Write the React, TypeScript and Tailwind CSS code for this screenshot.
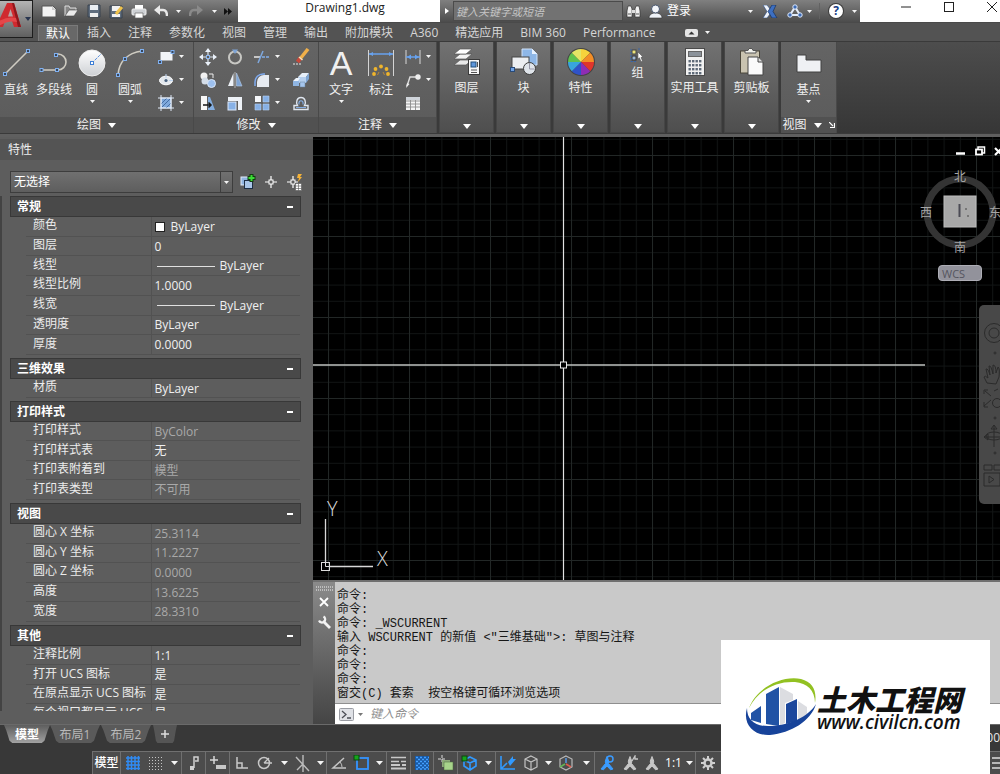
import React from "react";

type Kids = { children?: React.ReactNode };

const uiFont = "font-['Open_Sans','Noto_Sans_CJK_SC',sans-serif]";

/* ---------- small shared marks ---------- */

function Caret({ big = false }: { big?: boolean }) {
  return big ? (
    <svg width="8" height="5" viewBox="0 0 8 5" className="shrink-0"><path d="M0 0h8L4 5z" fill="#fff" /></svg>
  ) : (
    <svg width="5" height="3" viewBox="0 0 5 3" className="shrink-0"><path d="M0 0h5L2.5 3z" fill="#f4f4f4" /></svg>
  );
}

function Ico({ w = 18, h = 18, vb, children }: Kids & { w?: number; h?: number; vb?: string }) {
  return (
    <svg width={w} height={h} viewBox={vb ?? `0 0 ${w} ${h}`} fill="none" className="shrink-0">
      {children}
    </svg>
  );
}

function Grip({ x, y }: { x: number; y: number }) {
  return <rect x={x - 1.5} y={y - 1.5} width="3" height="3" fill="#39465a" stroke="#7fb0f0" strokeWidth="1" />;
}

/* ---------- ribbon: draw ---------- */

const LineIcon = () => (
  <Ico w={30} h={30}><path d="M4 26 27 3" stroke="#cfccc2" strokeWidth="1.6" /><Grip x={4} y={26} /><Grip x={27} y={3} /></Ico>
);
const PolyIcon = () => (
  <Ico w={30} h={30}><path d="M2 22h17a8 8 0 0 0 0-16h-2" stroke="#cfccc2" strokeWidth="1.6" /><Grip x={2.5} y={22} /><Grip x={18} y={22} /><Grip x={17} y={7} /></Ico>
);
const CircleIcon = () => (
  <Ico w={30} h={30}>
    <defs><linearGradient id="disc" x1="0" y1="0" x2="0" y2="1"><stop stopColor="#fff" /><stop offset="1" stopColor="#cdd0d4" /></linearGradient></defs>
    <circle cx="15" cy="15" r="13" fill="url(#disc)" stroke="#eee" /><path d="m15 15 9-9" stroke="#5a90dc" strokeDasharray="3 1" /><rect x="13.5" y="13.5" width="3" height="3" fill="#fff" stroke="#3e7fd6" />
  </Ico>
);
const ArcIcon = () => (
  <Ico w={30} h={30}><path d="M3 27C4 14 12 5 27 3" stroke="#cfccc2" strokeWidth="1.6" /><Grip x={3} y={27} /><Grip x={10} y={11} /><Grip x={27} y={3} /></Ico>
);
const RectIcon = () => (
  <Ico><rect x="3.5" y="4" width="12" height="8.500" fill="#f2f4f7" /><Grip x={3} y={14} /><Grip x={15.5} y={4} /></Ico>
);
const EllipseIcon = () => (
  <Ico><ellipse cx="9" cy="9.500" rx="6.500" ry="4.300" fill="#e4e9ee" stroke="#fff" /><circle cx="9" cy="9.500" r="1.600" fill="#49627f" /><path d="M9 3v4M12 9.500h4" stroke="#bcd2ee" /></Ico>
);
const HatchIcon = () => (
  <Ico>
    <rect x="4" y="4" width="10" height="10" fill="#7fa9dc" stroke="#e6eefa" /><path d="M4 10 10 4M5 13l8-8M9 14l5-5" stroke="#456da3" />
    <path d="M4 1v16M14 1v16M1 4h16M1 14h16" stroke="#dfe9f7" />
  </Ico>
);

/* ---------- ribbon: modify ---------- */

const MoveIcon = () => (
  <Ico><path d="M9 1v16M1 9h16" stroke="#dce6f2" strokeWidth="1.200" /><path d="M9 0 6 4h6zM9 18l-3-4h6zM0 9l4-3v6zM18 9l-4-3v6z" fill="#eaf1fa" /><rect x="7.500" y="7.500" width="3" height="3" fill="#5b5b5b" stroke="#8db7ee" /></Ico>
);
const RotateIcon = () => (
  <Ico><circle cx="9" cy="9.500" r="6" stroke="#c8c8c4" strokeWidth="2" /><path d="M6 1.500h6L9 6z" fill="#7ea4d6" /></Ico>
);
const TrimIcon = () => (
  <Ico><path d="M1 9h6" stroke="#e8e8e8" strokeWidth="1.500" /><path d="M9 9h8" stroke="#82aee8" strokeWidth="1.500" strokeDasharray="3 1" /><path d="M5 15 10 3" stroke="#7fa9df" strokeWidth="1.500" /></Ico>
);
const EraseIcon = () => (
  <Ico><path d="M16 1 8 11" stroke="#f0b04a" strokeWidth="3.500" /><path d="m8.500 10-3 4" stroke="#c8483a" strokeWidth="4" /><path d="m7 9 3.500 3" stroke="#f5e5bb" strokeWidth="1.500" /><path d="M1 16h8" stroke="#e8e8e8" strokeDasharray="2 1" /></Ico>
);
const CopyIcon = () => (
  <Ico><circle cx="5" cy="5" r="3.500" fill="#f2f2f2" /><circle cx="6" cy="10" r="3.500" fill="#d4dde8" /><circle cx="12.500" cy="12.500" r="4" fill="#9dc0ee" stroke="#dce9fa" /><path d="M10 3h4v4" stroke="#eee" /></Ico>
);
const MirrorIcon = () => (
  <Ico><path d="M7.500 2v13H2z" fill="#eef2f7" /><path d="M10.500 2v13H16z" fill="#7fa5d5" stroke="#b7cdea" strokeWidth=".6" /><path d="M9 1v16" stroke="#d5d5d5" strokeWidth=".7" /></Ico>
);
const FilletIcon = () => (
  <Ico><path d="M4 16V11a7 7 0 0 1 7-7h5v12z" fill="#e6eaf0" /><path d="M2 15v-4a8 8 0 0 1 8-8h2" stroke="#7eaaf0" strokeWidth="1.500" /></Ico>
);
const ExplodeIcon = () => (
  <Ico>
    <path d="m6 6 4-4h7l-3 4z" fill="#e6eff9" /><path d="M14 6l3-4v6l-3 4z" fill="#7fa6d4" /><path d="M6 6h8v6H6z" fill="#b5cfee" />
    <path d="m1 10 3-3h4l-2 3z" fill="#eef4fb" /><path d="M1 10h6v5H1z" fill="#8fb5e2" /><path d="M8 11h5v5H8z" fill="#a5c5ec" stroke="#64819f" strokeWidth=".5" />
  </Ico>
);
const StretchIcon = () => (
  <Ico><path d="M2 2h6v14H2z" fill="#f7f7f7" /><path d="M9 3h2l5 13H9z" fill="#83addf" /><path d="M4 11h8M9.500 8.500 12 11l-2.500 2.500" stroke="#161616" strokeWidth="1.500" /></Ico>
);
const ScaleIcon = () => (
  <Ico><path d="M2 3h14v13h-4V7H2z" fill="#eef2f7" /><rect x="2" y="8" width="8" height="8" fill="#87b1e6" stroke="#dbe8f9" /></Ico>
);
const ArrayIcon = () => (
  <Ico><rect x="2" y="2" width="6" height="6" fill="#f5f7fa" /><path d="M10 2h6v6h-6zM2 10h6v6H2zM10 10h6v6h-6z" fill="#86b0e5" stroke="#b7d1f2" strokeWidth=".6" /></Ico>
);
const OffsetIcon = () => (
  <Ico><path d="M2 15.500h14v-4h-3.500c2-3.500.5-8-3.500-8s-5.500 4.500-3.500 8H2z" stroke="#dfe6ef" strokeWidth="1.400" /><path d="M4 13.500h10M7 10.500c-1-5 5-5 4 0" stroke="#84ade3" strokeWidth="1.200" /></Ico>
);

/* ---------- ribbon: annotate and the rest ---------- */

const DimBigIcon = () => (
  <Ico w={28} h={30}>
    <path d="M1.500 2v26M26.500 2v26" stroke="#d4d4d4" /><path d="M2 6h24" stroke="#67a2ef" strokeWidth="1.500" /><path d="m2 6 4-2v4zM26 6l-4-2v4z" fill="#67a2ef" />
    <g fill="#f0b52c"><circle cx="7" cy="26" r="1.900" /><circle cx="8.500" cy="21" r="1.900" /><circle cx="14" cy="18.500" r="1.900" /><circle cx="19.500" cy="21" r="1.900" /><circle cx="21" cy="26" r="1.900" /></g>
    <path d="m12 24-1.500 3M16 24l1.500 3" stroke="#b8893a" />
  </Ico>
);
const DimSmallIcon = () => (
  <Ico><path d="M2 2v14M16 2v14" stroke="#d8d8d8" /><path d="M2 9h14" stroke="#67a2ef" strokeWidth="1.500" /><path d="m3 9 4-2.500v5zM15 9l-4-2.500v5z" fill="#67a2ef" /></Ico>
);
const LeaderIcon = () => (
  <Ico><path d="M3 15 6 6h7" stroke="#ddd" strokeWidth="1.400" /><path d="m2 17 1-5 2.500 1z" fill="#eee" /><circle cx="14" cy="6" r="2.700" fill="#eee" /></Ico>
);
const TableIcon = () => (
  <Ico><rect x="2" y="3" width="14" height="13" fill="#f5f5f5" /><path d="M2 7h14M2 10h14M2 13h14M6.500 3v13M11.500 3v13" stroke="#8d8d8d" strokeWidth=".9" /><path d="M2 3h14v3H2z" fill="#cfd4da" /></Ico>
);
const LayersIcon = () => (
  <Ico w={28} h={28}>
    <g stroke="#555" strokeWidth=".7"><path d="m1 17 6-5h12l-6 5z" fill="#e9e9e9" /><path d="m1 11 6-5h12l-6 5z" fill="#f4f4f4" /><path d="m1 6 6-5h12l-6 5z" fill="#fff" /></g>
    <rect x="15.500" y="11.500" width="11" height="15" fill="#f7f7f7" stroke="#3b3b3b" /><rect x="18" y="14" width="5" height="5" fill="#5f97dc" stroke="#23507d" /><path d="M18 22h6M18 24.500h6M24.500 14v5" stroke="#555" />
  </Ico>
);
const BlockIcon = () => (
  <Ico w={30} h={28}>
    <path d="M13 1h10l5 5v11H13z" fill="#8eb7e7" stroke="#cfe2fa" /><path d="M23 1v5h5" fill="#e8f2ff" /><rect x="3" y="9" width="17" height="12" fill="#eceef1" stroke="#454545" />
    <circle cx="20.500" cy="20.500" r="6" fill="#dfe4ea" stroke="#3c3c3c" /><path d="M20.500 15v6h5" stroke="#99a" /><rect x="1.500" y="19.500" width="4" height="4" fill="#6fa0e2" stroke="#294b79" />
  </Ico>
);
const wheel = ["#f6d33c", "#f28d26", "#e0352c", "#8e2db5", "#2f52c8", "#38a5dd", "#5ec24e", "#e3e565"];
function WheelIcon() {
  return (
    <Ico w={30} h={30}>
      <circle cx="15" cy="15" r="14" fill="#444" />
      {wheel.map((c, i) => {
        const a = ((i * 45 - 90) * Math.PI) / 180;
        const b = ((i * 45 - 45) * Math.PI) / 180;
        return <path key={c} d={`M15 15L${15 + 13 * Math.cos(a)} ${15 + 13 * Math.sin(a)}A13 13 0 0 1 ${15 + 13 * Math.cos(b)} ${15 + 13 * Math.sin(b)}Z`} fill={c} />;
      })}
    </Ico>
  );
}
const GroupIcon = () => (
  <Ico w={16} h={16}><rect x="2" y="2" width="4" height="4" fill="#ece37a" stroke="#444" /><rect x="2" y="8" width="4" height="4" fill="#9db6d4" stroke="#333" /><path d="M1 1v13M1 13.500h6M8 1h2" stroke="#3a66a8" strokeDasharray="2 1" /><path d="m8 4 5 5-2 .3 1.500 4-1.500.5-1.500-4L8 11z" fill="#fff" stroke="#444" strokeWidth=".5" /></Ico>
);
const CalcIcon = () => (
  <Ico w={20} h={28}>
    <rect x=".5" y=".5" width="19" height="27" fill="#f1f1f1" stroke="#4a4a4a" /><rect x="3.500" y="3.500" width="13" height="5" fill="#8b929a" stroke="#666" />
    {[12, 16, 20, 24].map((y) => [3.5, 7, 10.5, 14].map((x) => <rect key={`${x}-${y}`} x={x} y={y} width="2.400" height="2.400" fill="#5e6a78" />))}
  </Ico>
);
const PasteIcon = () => (
  <Ico w={26} h={28}>
    <rect x="1.500" y="3" width="19" height="22" fill="#c9c3b0" stroke="#4a463a" /><path d="M6 5V2.500h3l1-2h3l1 2h3V5z" fill="#f3f3ee" stroke="#555" />
    <path d="M9 9h10l5 5v13H9z" fill="#fafafa" stroke="#444" /><path d="M19 9v5h5" fill="#ddd" stroke="#444" />
  </Ico>
);
const BaseIcon = () => (
  <Ico w={26} h={26}><path d="M1 5h9v5h15v12H1z" fill="#eff1f4" stroke="#404040" /></Ico>
);

/* ---------- ribbon structure ---------- */

function BigTool({ icon, label, width, caret = false }: { icon: React.ReactNode; label: string; width: string; caret?: boolean }) {
  return (
    <button className={`${width} flex flex-col items-center pt-[6px]`}>
      <span className="flex h-[30px] items-center">{icon}</span>
      <span className="mt-1 text-xs leading-4 whitespace-nowrap">{label}</span>
      {caret && <span className="mt-[2px]"><Caret /></span>}
    </button>
  );
}

function SmallTool({ icon, label, caret = false }: { icon: React.ReactNode; label: string; caret?: boolean }) {
  return (
    <button aria-label={label} className="flex h-[23px] items-center">
      <span className="flex w-[27px] justify-center">{icon}</span>
      {caret && <Caret />}
    </button>
  );
}

function OpenPanel({ title, width, children, launcher = false }: Kids & { title: string; width: string; launcher?: boolean }) {
  return (
    <section className={`${width} flex shrink-0 flex-col border-r border-[#494949] bg-gradient-to-b from-[#646464] to-[#5b5b5b]`}>
      <div className="flex flex-1">{children}</div>
      <button className="flex h-4 items-center justify-center gap-[7px] bg-[#515151] text-xs leading-4">
        {title}<Caret big />
        {launcher && <svg width="6" height="6" viewBox="0 0 6 6"><path d="m0 0 4 4M5.500 1v4.500H1" stroke="#fff" fill="none" strokeWidth="1.200" /></svg>}
      </button>
    </section>
  );
}

function ClosedPanel({ title, icon, small = false }: { title: string; icon: React.ReactNode; small?: boolean }) {
  return (
    <button className="flex w-[55px] shrink-0 flex-col items-center border border-t-0 border-[#454545] bg-gradient-to-b from-[#727272] to-[#4e4e4e] pt-[5px]">
      <span className={small ? "flex h-[18px] items-center" : "flex h-[30px] items-center"}>{icon}</span>
      <span className={`${small ? "" : "mt-[3px]"} text-xs leading-4 whitespace-nowrap`}>{title}</span>
      <span className="mt-auto pb-[3px]"><Caret big /></span>
    </button>
  );
}

function Ribbon() {
  return (
    <div className="flex h-[93px] shrink-0 overflow-hidden border-t border-b border-[#3a3a3a] bg-gradient-to-b from-[#4d4d4d] to-[#363636] text-[#f0f0f0]">
      <OpenPanel title="绘图" width="w-[194px]">
        <BigTool icon={<LineIcon />} label="直线" width="w-8" />
        <BigTool icon={<PolyIcon />} label="多段线" width="w-11" />
        <BigTool icon={<CircleIcon />} label="圆" width="w-8" caret />
        <BigTool icon={<ArcIcon />} label="圆弧" width="w-11" caret />
        <div className="flex flex-col pt-[3px]">
          <SmallTool icon={<RectIcon />} label="矩形" caret />
          <SmallTool icon={<EllipseIcon />} label="椭圆" caret />
          <SmallTool icon={<HatchIcon />} label="图案填充" caret />
        </div>
      </OpenPanel>
      <OpenPanel title="修改" width="w-[125px]">
        <div className="grid grid-cols-[27px_27px_39px_27px] content-start pt-[3px]">
          <SmallTool icon={<MoveIcon />} label="移动" />
          <SmallTool icon={<RotateIcon />} label="旋转" />
          <SmallTool icon={<TrimIcon />} label="修剪" caret />
          <SmallTool icon={<EraseIcon />} label="删除" />
          <SmallTool icon={<CopyIcon />} label="复制" />
          <SmallTool icon={<MirrorIcon />} label="镜像" />
          <SmallTool icon={<FilletIcon />} label="圆角" caret />
          <SmallTool icon={<ExplodeIcon />} label="分解" />
          <SmallTool icon={<StretchIcon />} label="拉伸" />
          <SmallTool icon={<ScaleIcon />} label="缩放" />
          <SmallTool icon={<ArrayIcon />} label="阵列" caret />
          <SmallTool icon={<OffsetIcon />} label="偏移" />
        </div>
      </OpenPanel>
      <OpenPanel title="注释" width="w-[118px]">
        <BigTool icon={<span className="font-['Liberation_Sans',sans-serif] text-[34px] leading-[30px]">A</span>} label="文字" width="w-[44px]" caret />
        <BigTool icon={<DimBigIcon />} label="标注" width="w-9" />
        <div className="flex flex-col pt-[3px]">
          <SmallTool icon={<DimSmallIcon />} label="线性" caret />
          <SmallTool icon={<LeaderIcon />} label="引线" caret />
          <SmallTool icon={<TableIcon />} label="表格" />
        </div>
      </OpenPanel>
      <div className="flex gap-[2px] bg-[#3a3a3a] px-[2px]">
        <ClosedPanel title="图层" icon={<LayersIcon />} />
        <ClosedPanel title="块" icon={<BlockIcon />} />
        <ClosedPanel title="特性" icon={<WheelIcon />} />
        <ClosedPanel title="组" icon={<GroupIcon />} small />
        <ClosedPanel title="实用工具" icon={<CalcIcon />} />
        <ClosedPanel title="剪贴板" icon={<PasteIcon />} />
      </div>
      <OpenPanel title="视图" width="w-[56px]" launcher>
        <BigTool icon={<BaseIcon />} label="基点" width="w-full" caret />
      </OpenPanel>
    </div>
  );
}

/* ---------- title bar ---------- */

function Quick({ label, width = "w-[22px]", children }: Kids & { label: string; width?: string }) {
  return <button aria-label={label} className={`${width} flex h-full shrink-0 items-center justify-center`}>{children}</button>;
}

const barShade = "bg-gradient-to-b from-[#808080] to-[#4c4c4c]";

function TitleBar() {
  return (
    <div className="flex h-[23px] shrink-0 border-b border-[#4a4a4a] bg-white">
      <div className={`${barShade} flex w-[205px] shrink-0 items-center pl-[5px]`}>
        <Quick label="新建"><Ico w={16} h={14}><path d="M1 2h11l3 3v8H1z" fill="#f3f3f3" stroke="#555" /><path d="M11 2v4h4" fill="#ccc" /></Ico></Quick>
        <Quick label="打开"><Ico w={16} h={14}><path d="M2 12V2h4l1 2h6v2" fill="#878787" stroke="#ddd" /><path d="m2 12 4-6h9l-4 6z" fill="#ebebeb" stroke="#444" strokeWidth=".6" /></Ico></Quick>
        <Quick label="保存" width="w-[23px]"><Ico w={14} h={14}><path d="M1 1h12v12H1z" fill="#5f6d7e" stroke="#39424e" /><path d="M3 1h8v5H3z" fill="#e9edf2" /><path d="M3 9h8v4H3z" fill="#eee" /></Ico></Quick>
        <Quick label="另存为" width="w-[23px]"><Ico w={15} h={15}><path d="M1 2h12v12H1z" fill="#5f6d7e" stroke="#39424e" /><path d="M3 2h8v5H3zM3 10h8v3H3z" fill="#f2f2f2" /><path d="m13 3-6 7" stroke="#efc24c" strokeWidth="3" /></Ico></Quick>
        <Quick label="打印"><Ico w={16} h={15}><path d="M4 1h8v5H4z" fill="#fff" /><rect x="1" y="5" width="14" height="6" rx="1" fill="#cdd0d4" stroke="#eee" /><path d="M4 9h8v5H4z" fill="#fff" stroke="#666" strokeWidth=".7" /></Ico></Quick>
        <Quick label="放弃"><Ico w={14} h={12}><path d="M4 5h5q4 0 4 6" stroke="#e9e9e9" strokeWidth="2.400" /><path d="M0 5 6 0v10z" fill="#e9e9e9" /></Ico></Quick>
        <Quick label="放弃列表" width="w-3"><Caret /></Quick>
        <Quick label="重做" width="w-6"><Ico w={14} h={12}><path d="M10 5H5Q1 5 1 11" stroke="#8a8a8a" strokeWidth="2.400" /><path d="M14 5 8 0v10z" fill="#8a8a8a" /></Ico></Quick>
        <Quick label="重做列表" width="w-3"><Caret /></Quick>
        <Quick label="更多" width="w-4"><Ico w={8} h={7}><path d="M0 0v7l4-3.500zM4 0v7l4-3.500z" fill="#111" /></Ico></Quick>
      </div>
      <h1 className="w-[202px] shrink-0 pl-3 text-center text-xs leading-[15px] text-[#222]">Drawing1.dwg</h1>
      <div className={`${barShade} flex w-[420px] shrink-0 items-center`}>
        <Quick label="展开搜索" width="w-[13px]"><Ico w={4} h={6}><path d="M0 0v6l4-3z" fill="#fff" /></Ico></Quick>
        <input aria-label="搜索" placeholder="键入关键字或短语" className="h-5 w-[170px] shrink-0 border border-[#4b4b4b] bg-[#727272] px-[2px] text-[11px] text-white italic outline-none placeholder:text-[#c4c4c4]" />
        <Quick label="查找" width="w-[21px]"><Ico w={15} h={14}><path d="M2 2h3l1 3v8H1V7zM10 2h3l1 5v6H9V5z" fill="#f1f1f1" stroke="#333" strokeWidth=".7" /><path d="M6 6h3v3H6z" fill="#ddd" /><path d="M2 10h3M10 10h3" stroke="#555" /></Ico></Quick>
        <button className="flex h-full w-[109px] shrink-0 items-center gap-1 pl-1 text-xs text-white">
          <Ico w={15} h={15}><path d="M1 14q0-4 5-5h3q5 1 5 5z" fill="#eef2f8" stroke="#333" strokeWidth=".6" /><circle cx="7.500" cy="5" r="4" fill="#f4f6fa" stroke="#48566e" /></Ico>登录
          <span className="ml-auto"><Caret /></span>
        </button>
        <Quick label="应用商店" width="w-[34px]"><Ico w={15} h={13}><path d="M0 0h4l5 6.500L4 13H0l4-6.500z" fill="#f0f4fa" stroke="#274a86" strokeWidth=".6" /><path d="M13 0H9L5 6.500 9 13h5l-4-6.500z" fill="#3d6fc0" stroke="#17305f" strokeWidth=".7" /></Ico></Quick>
        <Quick label="连接" width="w-4"><Ico w={16} h={14}><path d="M8 3 3 11h10z" stroke="#e4edfb" strokeWidth="2" /><circle cx="8" cy="3" r="2.200" fill="#3c6bb6" stroke="#dfe9fa" /><circle cx="3" cy="11" r="2.200" fill="#3c6bb6" stroke="#dfe9fa" /><circle cx="13" cy="11" r="2.200" fill="#3c6bb6" stroke="#dfe9fa" /></Ico></Quick>
        <Quick label="连接列表" width="w-3"><Caret /></Quick>
        <span className="ml-1 h-4 w-px shrink-0 bg-[#626262]" />
        <Quick label="帮助" width="w-8">
          <span className="flex size-[14px] items-center justify-center rounded-full bg-white text-[12px] leading-[14px] font-bold text-[#173c84] ring-1 ring-[#3c3c3c]">?</span>
        </Quick>
        <Caret />
      </div>
      <div className="flex min-w-0 flex-1 items-start justify-between pt-[1px] pr-[2px] pl-10">
        <button aria-label="最小化"><Ico w={12} h={12}><path d="M1 6h10" stroke="#222" /></Ico></button>
        <button aria-label="最大化"><Ico w={12} h={12}><rect x="1.500" y="1.500" width="9" height="9" stroke="#222" /></Ico></button>
        <button aria-label="关闭"><Ico w={12} h={12}><path d="m1 1 10 10M11 1 1 11" stroke="#222" /></Ico></button>
      </div>
    </div>
  );
}

const menuTabs = ["默认", "插入", "注释", "参数化", "视图", "管理", "输出", "附加模块", "A360", "精选应用", "BIM 360", "Performance"];

function Header() {
  return (
    <header className="flex h-[41px] shrink-0 bg-[#535353]">
      <button aria-label="应用程序菜单" className="flex h-[38px] w-[33px] shrink-0 items-start gap-[2px] border border-l-0 border-[#1d1d1d] bg-gradient-to-b from-[#b4b4b4] to-[#606060]">
        <svg width="23" height="36" viewBox="0 0 23 36">
          <path d="M7 2h7l7 24h-7l-2-6H5l-2 6h-7z" fill="#cf2a2f" />
          <path d="M12 2h2l7 24h-3z" fill="#8e171c" />
          <path d="M10.500 8 8 15.500h5z" fill="#b9a5a5" />
          <path d="M-1 20q9-5 17-3l1 4q-9-2-18 4z" fill="#e4474a" />
        </svg>
        <svg width="6" height="4" viewBox="0 0 6 4" className="self-center"><path d="M0 0h6L3 4z" fill="#28354f" /></svg>
      </button>
      <div className="flex min-w-0 flex-1 flex-col">
        <TitleBar />
        <nav className="flex flex-1 items-stretch gap-px pl-[5px] text-xs leading-[18px] text-[#d6d6d6]">
          {menuTabs.map((t, i) => (
            <button key={t} className={i === 0 ? "mt-[2px] border border-b-0 border-[#7a7a7a] bg-[#686868] px-[7px] leading-[14px] text-white" : "shrink-0 px-2 pt-[1px]"}>{t}</button>
          ))}
          <button aria-label="最小化功能区" className="ml-5 flex items-center gap-[7px]">
            <Ico w={13} h={8}><rect width="13" height="8" rx="2" fill="#e4e4e4" /><path d="M3.500 5.500h6l-3-3z" fill="#333" /></Ico><Caret />
          </button>
        </nav>
      </div>
    </header>
  );
}

/* ---------- properties palette ---------- */

type Row = { name: string; value: string; dim?: boolean; mark?: "swatch" | "line" };
type Group = { title: string; height: string; rows: Row[] };

const groups: Group[] = [
  {
    title: "常规", height: "h-[138px]", rows: [
      { name: "颜色", value: "ByLayer", mark: "swatch" }, { name: "图层", value: "0" }, { name: "线型", value: "ByLayer", mark: "line" },
      { name: "线型比例", value: "1.0000" }, { name: "线宽", value: "ByLayer", mark: "line" }, { name: "透明度", value: "ByLayer" }, { name: "厚度", value: "0.0000" },
    ],
  },
  { title: "三维效果", height: "h-[19px]", rows: [{ name: "材质", value: "ByLayer" }] },
  {
    title: "打印样式", height: "h-[78px]", rows: [
      { name: "打印样式", value: "ByColor", dim: true }, { name: "打印样式表", value: "无" }, { name: "打印表附着到", value: "模型", dim: true }, { name: "打印表类型", value: "不可用", dim: true },
    ],
  },
  {
    title: "视图", height: "h-[98px]", rows: [
      { name: "圆心 X 坐标", value: "25.3114", dim: true }, { name: "圆心 Y 坐标", value: "11.2227", dim: true }, { name: "圆心 Z 坐标", value: "0.0000", dim: true },
      { name: "高度", value: "13.6225", dim: true }, { name: "宽度", value: "28.3310", dim: true },
    ],
  },
  {
    title: "其他", height: "h-[78px]", rows: [
      { name: "注释比例", value: "1:1" }, { name: "打开 UCS 图标", value: "是" }, { name: "在原点显示 UCS 图标", value: "是" }, { name: "每个视口都显示 UCS", value: "是" },
    ],
  },
];

function PropertyGroup({ group }: { group: Group }) {
  return (
    <section className="mb-[3px]">
      <button className="flex h-[21px] w-full items-center justify-between border border-[#383838] bg-[#494949] pr-[7px] pl-[6px] text-xs leading-[19px] font-bold text-white">
        {group.title}<span className="h-[2px] w-[6px] bg-white" />
      </button>
      <table className={`${group.height} ml-4 w-[274px] table-fixed text-xs leading-4`}>
        <tbody>
          {group.rows.map((r) => (
            <tr key={r.name} className="border-b border-[#525252]">
              <th scope="row" className="w-[125px] border-r border-[#525252] p-0 pb-[2px] pl-[7px] text-left font-normal whitespace-nowrap text-[#ececec]">{r.name}</th>
              <td className={`p-0 pt-px pl-[3px] whitespace-nowrap ${r.dim ? "text-[#a9a9a9]" : "text-[#f0f0f0]"}`}>
                <span className="flex items-center">
                  {r.mark === "swatch" && <span className="mr-[6px] size-[10px] border border-[#222] bg-white" />}
                  {r.mark === "line" && <span className="mr-[5px] ml-[2px] h-px w-[58px] bg-[#e0e0e0]" />}
                  {r.value}
                </span>
              </td>
            </tr>
          ))}
        </tbody>
      </table>
    </section>
  );
}

function Properties() {
  return (
    <aside className="flex w-[313px] shrink-0 flex-col bg-[#5d5d5d]">
      <h2 className="mt-[2px] h-[21px] bg-[#545454] pl-2 text-xs leading-[21px] text-[#eee]">特性</h2>
      <div className="mt-[11px] flex h-[22px] shrink-0 items-center pl-[10px]">
        <label className="grid h-full w-[223px] grid-cols-[1fr_12px] border border-[#3d3d3d] bg-gradient-to-b from-[#707070] to-[#5e5e5e]">
          <select aria-label="选定对象" className="col-span-2 col-start-1 row-start-1 appearance-none bg-transparent pl-[3px] text-xs text-white outline-none"><option>无选择</option></select>
          <span className="pointer-events-none col-start-2 row-start-1 flex items-center justify-center border-l border-[#3d3d3d]"><Caret /></span>
        </label>
        <button aria-label="切换选择" className="ml-[7px]"><Ico w={16} h={16}><rect x="1" y="3" width="8" height="8" fill="#8fb3df" stroke="#e4eefb" /><rect x="4.500" y="6.500" width="8" height="8" fill="#a9c5e8" stroke="#1d2e45" /><path d="M11.500 0v8M7.500 4h8" stroke="#133b10" strokeWidth="4" /><path d="M11.500 1v6M8.500 4h6" stroke="#3bdc35" strokeWidth="2" /></Ico></button>
        <button aria-label="选择对象" className="ml-[7px]"><Ico w={16} h={16}><path d="M8 2v4M8 10v4M2 8h4M10 8h4" stroke="#fff" strokeWidth="1.200" /><rect x="6" y="6" width="4" height="4" stroke="#fff" /></Ico></button>
        <button aria-label="快速选择" className="ml-[7px]"><Ico w={17} h={17}><path d="M7 2v4M7 10v4M1 8h4M9 8h3" stroke="#fff" strokeWidth="1.200" /><rect x="5" y="6" width="4" height="4" stroke="#fff" /><path d="M12 0h4l-2 3h2l-4 5 1-4h-2z" fill="#f5b338" /><rect x="9.500" y="9.500" width="6" height="7" fill="#fff" stroke="#555" strokeWidth=".6" /><path d="M9.500 12h6M9.500 14.500h6M12.500 9.500v7" stroke="#555" strokeWidth=".6" /></Ico></button>
      </div>
      <div className="mt-[3px] mb-[13px] min-h-0 flex-1 overflow-hidden">
        <div className="border-l-2 border-[#434343] pr-3 pl-2">
          {groups.map((g) => <PropertyGroup key={g.title} group={g} />)}
        </div>
      </div>
    </aside>
  );
}

/* ---------- drawing canvas ---------- */

function ViewCube() {
  return (
    <div className="absolute top-8 -right-[4px] h-[88px] w-[82px] text-xs leading-4 text-[#a6a6a6]">
      <svg width="82" height="88" viewBox="0 0 82 88" className="absolute inset-0">
        <circle cx="38" cy="43" r="33" fill="none" stroke="#343434" strokeWidth="7" />
        <rect x="22" y="27" width="32" height="31" fill="#a8a8a8" stroke="#bcbcbc" /><path d="M37.500 35v13" stroke="#4b4b55" strokeWidth="2" /><path d="M44 39v2M45 47h2" stroke="#666" strokeWidth="1.500" />
      </svg>
      <span className="absolute top-0 left-8">北</span>
      <span className="absolute top-9 -left-[2px]">西</span>
      <span className="absolute top-9 left-[67px]">东</span>
      <span className="absolute top-[71px] left-8">南</span>
    </div>
  );
}

function Canvas() {
  return (
    <main className="relative min-h-0 flex-1 overflow-hidden bg-black">
      <svg className="absolute inset-0 h-full w-full">
        <defs>
          <pattern id="minor" x="15" y="18" width="16.200" height="16.200" patternUnits="userSpaceOnUse"><path d="M0 .5h16.200M.5 0v16.200" stroke="#121515" fill="none" /></pattern>
          <pattern id="major" x="15" y="18" width="81" height="81" patternUnits="userSpaceOnUse"><path d="M0 .5h81M.5 0v81" stroke="#222726" fill="none" /></pattern>
        </defs>
        <rect width="100%" height="100%" fill="url(#minor)" />
        <rect width="100%" height="100%" fill="url(#major)" />
        <path d="M0 228h247M254 228h358" stroke="#bfc1bf" strokeWidth="1.500" />
        <path d="M250.500 0v225M250.500 231v800" stroke="#e2e2e2" strokeWidth="1.200" />
        <rect x="247.500" y="225" width="6" height="6" fill="#000" stroke="#e8e8e8" />
      </svg>
      <svg width="84" height="82" viewBox="0 0 84 82" className="absolute bottom-0 left-2 font-['Open_Sans',sans-serif] font-light">
        <path d="M4.500 21v43M9 68.500h43" stroke="#d8d8d8" strokeWidth="1.300" /><rect x=".5" y="64.500" width="8" height="8" stroke="#ddd" fill="none" /><path d="M4.500 64v4.500h4" stroke="#ddd" fill="none" />
        <text x="6" y="18" fill="#d8d8d8" fontSize="20">Y</text>
        <text x="56" y="68" fill="#d8d8d8" fontSize="20">X</text>
      </svg>
      <div className="absolute top-2 -right-[4px] flex gap-2">
        <button aria-label="最小化视口"><Ico w={12} h={12}><path d="M2 8.500h9" stroke="#fff" strokeWidth="2.500" /></Ico></button>
        <button aria-label="还原视口"><Ico w={12} h={12}><path d="M4 4V2h6.500v6H8" stroke="#fff" strokeWidth="1.500" /><rect x="2" y="4.500" width="6" height="5" stroke="#fff" strokeWidth="1.800" /></Ico></button>
        <button aria-label="关闭视口"><Ico w={10} h={12}><path d="m1 3 7 7M8 3l-7 7" stroke="#fff" strokeWidth="2.200" /></Ico></button>
      </div>
      <ViewCube />
      <button className="absolute top-32 right-[18px] h-4 w-[44px] rounded-[4px] border border-[#aeaeb6] bg-[#92929b] pl-[3px] text-left text-[11px] leading-[13px] text-[#55555f]">WCS</button>
      <div className="absolute top-[168px] -right-[8px] h-[199px] w-[29px] rounded-[5px] bg-[#484848]">
        <svg width="29" height="199" viewBox="0 0 29 199" fill="none" stroke="#2b2b2b">
          <circle cx="15" cy="28" r="9.500" /><circle cx="15" cy="28" r="5" /><circle cx="16" cy="48" r="1" />
          <path d="m8 78-3-6q1-2 4 1l-2-9q2-1 4 6l-1-9q2-1 4 8V60q3 0 3 8l2-6q2 1 1 10l-3 7z" />
          <path d="m6 86 6 5M5 101l7-6M5 89v-4h4M5 97v5h4M15 86l4-2" /><circle cx="18" cy="98" r="4.500" /><circle cx="16" cy="113" r="1" />
          <path d="M5 132h16M15 120v22M5 132l4-3v6zM15 120l-3 4h6z" /><ellipse cx="15" cy="131" rx="8" ry="4" /><circle cx="16" cy="148" r="1" />
          <path d="M5 160h8v5H5zM15 160h8v5h-8zM5 168h16v13H5zM10 171v7l5-3.500z" />
        </svg>
      </div>
    </main>
  );
}

const history = ["命令:", "命令:", "命令: _WSCURRENT", "输入 WSCURRENT 的新值 <\"三维基础\">: 草图与注释", "命令:", "命令:", "命令:", "窗交(C) 套索  按空格键可循环浏览选项"];

function CommandLine() {
  return (
    <section className="flex h-36 shrink-0 border-t-2 border-[#6f6f6f] bg-[#c9c9c9]">
      <div className="flex w-[22px] shrink-0 flex-col items-center bg-gradient-to-b from-[#8b8b8b] to-[#454545] pt-1">
        <svg width="17" height="5"><path d="M0 1h17M0 4h17" stroke="#bdbdbd" strokeWidth="2" strokeDasharray="1 1" /></svg>
        <button aria-label="关闭命令行" className="mt-[6px]"><Ico w={10} h={10}><path d="m1 1 8 8M9 1 1 9" stroke="#fff" strokeWidth="1.800" /></Ico></button>
        <button aria-label="自定义" className="mt-2"><Ico w={13} h={14}><path d="m5 6 7 7" stroke="#f2f2f2" strokeWidth="2.800" /><path d="M5.500 1.500A3.200 3.200 0 1 1 1 5.500" stroke="#f2f2f2" strokeWidth="2.200" /></Ico></button>
      </div>
      <div className="flex min-w-0 flex-1 flex-col">
        <div className="min-h-0 flex-1 overflow-hidden pt-[7px] pl-[2px] font-['Liberation_Mono','Noto_Sans_CJK_SC',monospace] text-xs leading-[14px] whitespace-pre text-[#161616]">
          {history.map((l, i) => <p key={i} className="h-[14px]">{l}</p>)}
        </div>
        <div className="flex h-[21px] shrink-0 items-center border-t border-[#8f8f8f] bg-white pl-1">
          <button aria-label="最近使用的命令" className="flex items-center gap-1">
            <Ico w={15} h={13}><rect x=".5" y=".5" width="14" height="12" rx="1" fill="#dfe1e6" stroke="#9a9ca3" /><path d="m3 3 4 3.500L3 10M8 10h4" stroke="#4b4d55" strokeWidth="1.300" /></Ico>
            <svg width="5" height="3" viewBox="0 0 5 3"><path d="M0 0h5L2.500 3z" fill="#777" /></svg>
          </button>
          <input aria-label="命令" placeholder="键入命令" className="ml-[7px] w-80 text-xs italic outline-none placeholder:text-[#8e8e8e]" />
        </div>
      </div>
    </section>
  );
}

/* ---------- bottom bars ---------- */

const sheet = "h-[18px] text-xs leading-[17px] [clip-path:polygon(0_0,100%_0,95%_30%,88%_88%,82%_100%,18%_100%,12%_88%,5%_30%)]";

function LayoutTabs() {
  return (
    <div className="flex h-[27px] shrink-0 border-t border-[#6a6a6a] bg-[#383838]">
      <button className={`${sheet} ml-1 w-[46px] bg-gradient-to-b from-[#5e5e5e] to-[#a2a2a2] font-bold text-white`}>模型</button>
      <button className={`${sheet} w-[50px] bg-[#5a5a5a] text-[#b9b9b9]`}>布局1</button>
      <button className={`${sheet} ml-px w-[50px] bg-[#5a5a5a] text-[#b9b9b9]`}>布局2</button>
      <button aria-label="新建布局" className={`${sheet} ml-[2px] flex w-6 items-center justify-center bg-[#555]`}><Ico w={8} h={8}><path d="M4 0v8M0 4h8" stroke="#ddd" strokeWidth="1.500" /></Ico></button>
      <span className="ml-auto text-xs leading-[26px] text-[#e6e6e6]">00</span>
    </div>
  );
}

const sep = "border-r border-[#707070]";

function Cell({ label, w = "w-[23px]", end = false, children }: Kids & { label: string; w?: string; end?: boolean }) {
  return <button aria-label={label} className={`${w} ${end ? sep : ""} flex h-full shrink-0 items-center justify-center`}>{children}</button>;
}

const Person = ({ tone }: { tone: string }) => (
  <path d="M8 1.500 6.300 6 6.500 8.500 2 14l2.500.800L8 11l3.500 3.800L14 14 9.500 8.500 9.700 6z" fill={tone} stroke={tone} />
);

const DropCaret = () => <svg width="7" height="4" viewBox="0 0 7 4"><path d="M0 0h7L3.500 4z" fill="#f4f4f4" /></svg>;

function StatusBar() {
  return (
    <footer className="flex h-[23px] shrink-0 bg-[#383838] pl-[92px]">
      <div className="flex min-w-0 flex-1 items-center overflow-hidden border-t border-l border-[#707070] bg-[#4c4c4c] text-xs text-white">
        <button className={`${sep} h-full w-7 shrink-0 font-medium whitespace-nowrap`}>模型</button>
        <Cell label="栅格"><Ico w={16} h={16}><path d="M3 1v14M6.500 1v14M10 1v14M13.500 1v14M1 3h14M1 6.500h14M1 10h14M1 13.500h14" stroke="#2f8bf4" strokeWidth="1.500" /></Ico></Cell>
        <Cell label="捕捉"><Ico w={15} h={15}><path d="M1 1.500h14M1 4.500h14M1 7.500h14M1 10.500h14M1 13.500h14" stroke="#c5c5c5" strokeDasharray="1 2" /></Ico></Cell>
        <Cell label="捕捉设置" w="w-[15px]" end><DropCaret /></Cell>
        <Cell label="推断约束" w="w-6" end><Ico w={12} h={16}><path d="M6 13V2h4v4H7" stroke="#d0d0d0" strokeWidth="1.500" /><rect x="2" y="11" width="4" height="4" fill="#d0d0d0" /></Ico></Cell>
        <Cell label="动态输入" w="w-6" end><Ico w={16} h={16}><path d="M4 1v8M0 5h8" stroke="#d8d8d8" strokeWidth="1.500" /><rect x="6" y="10" width="10" height="4" fill="#c8c8c8" /></Ico></Cell>
        <Cell label="正交"><Ico w={14} h={16}><path d="M2 2v11h11M2 8h5v5" stroke="#c8c8c8" strokeWidth="1.500" /></Ico></Cell>
        <Cell label="极轴"><Ico w={16} h={16}><circle cx="7" cy="8" r="5.500" stroke="#c8c8c8" strokeWidth="1.500" /><path d="M7 8h8M7 8l5-5" stroke="#c8c8c8" strokeWidth="1.300" /></Ico></Cell>
        <Cell label="极轴设置" w="w-4"><DropCaret /></Cell>
        <Cell label="等轴测" w="w-[22px]"><Ico w={17} h={17}><path d="m1 2 13 14M8 0v17M2 15 8 9" stroke="#bdbdbd" strokeWidth="1.400" /></Ico></Cell>
        <Cell label="等轴测设置" w="w-[13px]" end><DropCaret /></Cell>
        <Cell label="对象追踪"><Ico w={16} h={14}><path d="M13 2 2 12h13" stroke="#c4c4c4" strokeWidth="1.500" /><path d="M9 6q2 2 2 5" stroke="#c4c4c4" /></Ico></Cell>
        <Cell label="对象捕捉"><Ico w={17} h={16}><rect x="4" y="3" width="11" height="11" stroke="#3494ff" strokeWidth="1.800" /><rect x="1" y="0" width="5" height="5" fill="#16a51b" stroke="#0a4410" /></Ico></Cell>
        <Cell label="捕捉模式" w="w-[14px]" end><DropCaret /></Cell>
        <Cell label="线宽" w="w-6" end><Ico w={15} h={14}><path d="M0 1.500h15M0 5.500h8M10 5.500h5" stroke="#c8c8c8" strokeWidth="1.500" /><path d="M0 9h9M11 9h4M0 12.500h15" stroke="#c8c8c8" strokeWidth="2" /></Ico></Cell>
        <Cell label="透明度" end><Ico w={14} h={14}><rect width="14" height="14" fill="#1859a5" /><path d="M1 1.500h13M1 5.500h13M1 9.500h13M1 13h13M3 3.500h11M3 7.500h11M3 11.500h11" stroke="#43a0ff" strokeWidth="1.500" strokeDasharray="2 2" /></Ico></Cell>
        <Cell label="选择循环" w="w-6" end><Ico w={16} h={16}><path d="M4 0v8M0 4h8" stroke="#ddd" strokeDasharray="3 1" /><rect x="4" y="5" width="8" height="7" fill="#8eac7b" /><rect x="6" y="7" width="9" height="8" fill="#a7d48b" stroke="#45633a" strokeWidth=".5" /></Ico></Cell>
        <Cell label="三维对象捕捉"><Ico w={17} h={16}><path d="m9 2 6 3v6l-6 4-6-4V5zM3 5l6 3 6-3M9 8v7" stroke="#319aff" strokeWidth="1.600" /><rect x="1" y="1" width="5" height="5" fill="#16a51b" stroke="#0a4410" /></Ico></Cell>
        <Cell label="三维捕捉设置" w="w-[15px]" end><DropCaret /></Cell>
        <Cell label="动态 UCS"><Ico w={17} h={16}><path d="M2 1v13h14M2 14l6-6" stroke="#319aff" strokeWidth="1.600" /><path d="m9 7 5-6v3h3l-6 7z" fill="#319aff" /></Ico></Cell>
        <Cell label="选择过滤"><Ico w={16} h={16}><path d="m8 1 6 3v8l-6 3-6-3V4zM2 4l6 3 6-3M8 7v8" stroke="#c4c4c4" strokeWidth="1.200" /></Ico></Cell>
        <Cell label="过滤设置" w="w-3"><DropCaret /></Cell>
        <Cell label="小控件" w="w-6"><Ico w={16} h={16}><path d="m8 1 6 3v8l-6 3-6-3V4z" stroke="#b9b9b9" strokeWidth="1.200" /><path d="M8 8V3" stroke="#58a5ff" strokeWidth="1.300" /><path d="m8 9 5 3" stroke="#e05a4d" strokeWidth="1.500" /><path d="m7 9-5 3" stroke="#63b455" strokeWidth="1.500" /></Ico></Cell>
        <Cell label="小控件设置" w="w-[17px]" end><DropCaret /></Cell>
        <Cell label="注释可见性"><Ico w={16} h={16}><Person tone="#3a9bff" /><circle cx="11" cy="4" r="3" stroke="#3a9bff" strokeWidth="1.500" /></Ico></Cell>
        <Cell label="自动缩放"><Ico w={16} h={16}><Person tone="#c6c6c6" /><path d="m10 6 3-5v3h3" stroke="#c6c6c6" strokeWidth="1.300" /></Ico></Cell>
        <Cell label="注释比例" w="w-[22px]"><Ico w={16} h={16}><Person tone="#c6c6c6" /></Ico></Cell>
        <button className={`${sep} flex h-full w-[33px] shrink-0 items-center justify-center gap-1`}>1:1<DropCaret /></button>
        <Cell label="切换工作空间"><Ico w={14} h={14}><circle cx="7" cy="7" r="3.500" stroke="#d0d0d0" strokeWidth="2.500" /><path d="M7 0v3M7 11v3M0 7h3M11 7h3M2 2l2 2M10 10l2 2M12 2l-2 2M4 10l-2 2" stroke="#d0d0d0" strokeWidth="2" /></Ico></Cell>
        <button aria-label="自定义状态栏" className="-mr-1 ml-auto"><Ico w={12} h={12}><path d="M0 1h12M0 6h12M0 11h12" stroke="#ddd" strokeWidth="1.500" /></Ico></button>
      </div>
    </footer>
  );
}

function Watermark() {
  return (
    <a href="#civilcn" className="absolute right-[10px] bottom-0 flex h-[134px] w-[269px] items-center bg-white pl-6 text-[#111]">
      <svg width="72" height="60" viewBox="0 0 72 60" className="shrink-0">
        <path d="M35 10 48 17v6l-8 3v20l-5 2z" fill="#dcdde1" /><path d="m53 24 9 6v8l-9 6z" fill="#dcdde1" />
        <path d="m6 36 10-7v17l-10-3zM21 17l13-7v39l-13-2z" fill="#2153a5" /><path d="m41 27 11-5v22l-11 3z" fill="#1c479c" />
        <path d="M4 31C12 10 38-2 56 2c12 3 16 12 14 24C70 13 62 6 50 5 32 4 14 12 4 31z" fill="#92c122" />
        <path d="M2 31C-3 48 10 59 25 58c21-2 41-14 46-31-8 13-26 21-45 22C10 50 2 43 2 31z" fill="#17439a" />
      </svg>
      <span className="flex flex-col italic">
        <span className="font-['Noto_Sans_CJK_SC',sans-serif] text-[29px] leading-[30px] font-black whitespace-nowrap">土木工程网</span>
        <span className="text-[19px] leading-[18px] font-semibold">www.civilcn.com</span>
      </span>
    </a>
  );
}

export default function App() {
  return (
    <div className={`${uiFont} relative flex h-screen w-full flex-col overflow-hidden bg-[#5d5d5d]`}>
      <Header />
      <Ribbon />
      <div className="h-[3px] shrink-0 bg-[#5f5f5f]" />
      <div className="flex min-h-0 flex-1">
        <Properties />
        <div className="flex min-w-0 flex-1 flex-col">
          <Canvas />
          <CommandLine />
        </div>
      </div>
      <LayoutTabs />
      <StatusBar />
      <Watermark />
    </div>
  );
}
